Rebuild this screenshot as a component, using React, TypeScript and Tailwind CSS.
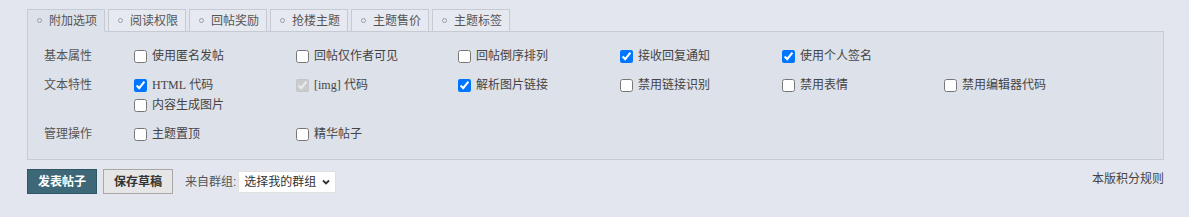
import React from 'react';

const FONT = "font-['Liberation_Sans','Noto_Sans_CJK_SC',sans-serif]";

const tabs = ['附加选项', '阅读权限', '回帖奖励', '抢楼主题', '主题售价', '主题标签'];

type Opt = { label: React.ReactNode; checked?: boolean; disabled?: boolean };

const rows: { title: string; items: Opt[] }[] = [
    {
        title: '基本属性',
        items: [
            { label: '使用匿名发帖' },
            { label: '回帖仅作者可见' },
            { label: '回帖倒序排列' },
            { label: '接收回复通知', checked: true },
            { label: '使用个人签名', checked: true },
        ],
    },
    {
        title: '文本特性',
        items: [
            { label: <><span className="font-['Liberation_Serif',serif]">HTML</span> 代码</>, checked: true },
            { label: <><span className="font-['Liberation_Serif',serif]">[img]</span> 代码</>, checked: true, disabled: true },
            { label: '解析图片链接', checked: true },
            { label: '禁用链接识别' },
            { label: '禁用表情' },
            { label: '禁用编辑器代码' },
            { label: '内容生成图片' },
        ],
    },
    {
        title: '管理操作',
        items: [{ label: '主题置顶' }, { label: '精华帖子' }],
    },
];

const Check = ({ opt }: { opt: Opt }) => (
    <label className="w-[162px] h-5 flex items-center text-[12px] text-[#444]">
        <input
            type="checkbox"
            defaultChecked={opt.checked}
            disabled={opt.disabled}
            className="m-0 w-[13px] h-[13px] mr-[5px] accent-[#0075ff]"
        />
        <span>{opt.label}</span>
    </label>
);

export default function App() {
    return (
        <div className={`${FONT} w-[1189px] h-[217px] bg-[#e3e6ee] pl-[27px] pr-[25px] pt-[9px]`}>
            {/* tabs */}
            <div className="flex gap-[3px] relative z-10">
                {tabs.map((t, i) => (
                    <div
                        key={t}
                        className={`w-[78px] h-[23px] flex items-center pl-[9px] text-[12px] text-[#555] border border-[#c6cad3] ${
                            i === 0 ? 'bg-[#dde1ea] border-b-[#dde1ea]' : 'bg-[#e6e9f0] h-[22px]'
                        }`}
                    >
                        <span className="w-[5px] h-[5px] rounded-full border border-[#9a9ea6] mr-[7px]" />
                        {t}
                    </div>
                ))}
            </div>

            {/* options panel */}
            <div className="-mt-px border border-[#c6cad3] bg-[#dde1ea] pt-[14px] pb-[15px] pl-[16px] flex flex-col gap-[9px]">
                {rows.map((r) => (
                    <div key={r.title} className="flex">
                        <div className="w-[90px] h-5 flex items-center text-[12px] text-[#555] shrink-0">{r.title}</div>
                        <div className="flex flex-wrap w-[1000px]">
                            {r.items.map((o, i) => (
                                <Check key={i} opt={o} />
                            ))}
                        </div>
                    </div>
                ))}
            </div>

            {/* actions */}
            <div className="flex items-center mt-[9px]">
                <button className="w-[70px] h-[25px] bg-[#3e6877] border border-[#2f5664] text-white text-[12px] font-bold">
                    发表帖子
                </button>
                <button className="ml-[6px] w-[70px] h-[25px] bg-[#e6e6e6] border border-[#a8a8a8] text-[#333] text-[12px] font-bold">
                    保存草稿
                </button>
                <span className="ml-[12px] text-[12px] text-[#555]">来自群组:</span>
                <div className="ml-[2px] w-[98px] h-[22px] bg-white border border-[#e0e0e0] flex items-center justify-between pl-[5px] pr-[4px] text-[12px] text-[#333]">
                    <span>选择我的群组</span>
                    <svg width="10" height="10" viewBox="0 0 10 10" fill="none">
                        <path d="M2 3.5 L5 6.5 L8 3.5" stroke="#333" strokeWidth="1.8" />
                    </svg>
                </div>
                <span className="ml-auto text-[12px] text-[#444] self-start mt-[1px]">本版积分规则</span>
            </div>
        </div>
    );
}
